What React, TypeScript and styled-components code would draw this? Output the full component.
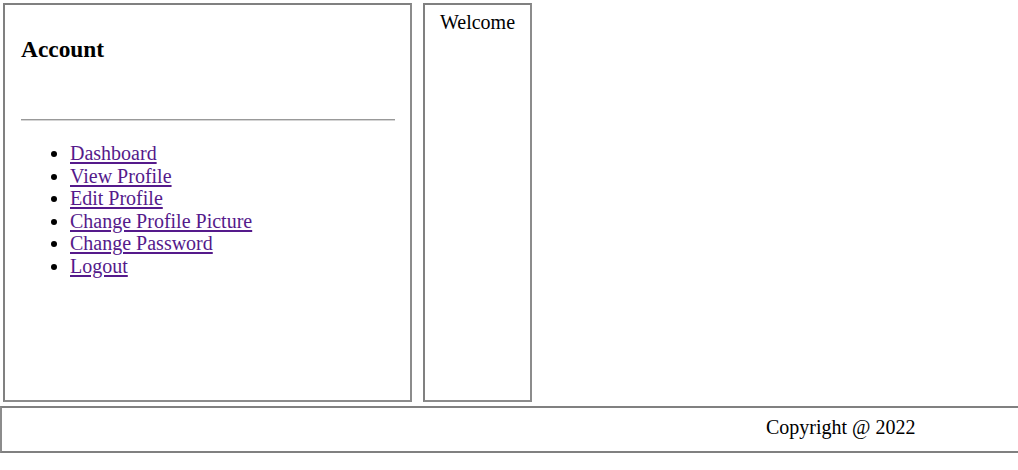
import React from 'react';
import styled, { createGlobalStyle } from 'styled-components';

const Global = createGlobalStyle`
  html, body {
    margin: 0;
    padding: 0;
    background: #fff;
    font-family: "Liberation Serif", "Times New Roman", serif;
    font-size: 20px;
    line-height: 22.5px;
    color: #000;
  }
`;

const Page = styled.div`
  padding-top: 3px;
`;

const Main = styled.div`
  display: flex;
  align-items: stretch;
  gap: 11px;
  padding-left: 3px;
  height: 399px;
`;

const Panel = styled.div<{ $width: number }>`
  box-sizing: border-box;
  width: ${(p) => p.$width}px;
  border: 2px solid #808080;
  border-right-color: #8c8c8c;
  border-bottom-color: #8c8c8c;
`;

const Sidebar = styled(Panel)`
  padding: 0 15px 0 16px;
`;

const Heading = styled.h3`
  margin: 31px 0 0;
  font-size: 23.4px;
  line-height: 27px;
  font-weight: bold;
`;

const Rule = styled.hr`
  margin: 56px 0 0;
  border: 0;
  border-top: 1px solid #999;
  border-bottom: 1px solid #d4d4d4;
  height: 0;
`;

const Menu = styled.ul`
  margin: 21px 0 0;
  padding-left: 49px;
  list-style: disc;
`;

const MenuLink = styled.a`
  color: #551a8b;
  text-decoration: underline;
  text-underline-offset: 2px;
`;

const Content = styled(Panel)`
  text-align: center;
  padding-top: 6px;
`;

const Footer = styled.div`
  box-sizing: border-box;
  margin-top: 4px;
  height: 47px;
  border-top: 2px solid #808080;
  border-bottom: 2px solid #808080;
  border-left: 2px solid #8c8c8c;
  padding: 8px 0 0 764px;
`;

const links = [
  'Dashboard',
  'View Profile',
  'Edit Profile',
  'Change Profile Picture',
  'Change Password',
  'Logout',
];

export default function App() {
  return (
    <Page>
      <Global />
      <Main>
        <Sidebar $width={409}>
          <Heading>Account</Heading>
          <Rule />
          <Menu>
            {links.map((l) => (
              <li key={l}>
                <MenuLink href="#">{l}</MenuLink>
              </li>
            ))}
          </Menu>
        </Sidebar>
        <Content $width={109}>Welcome</Content>
      </Main>
      <Footer>Copyright @ 2022</Footer>
    </Page>
  );
}
